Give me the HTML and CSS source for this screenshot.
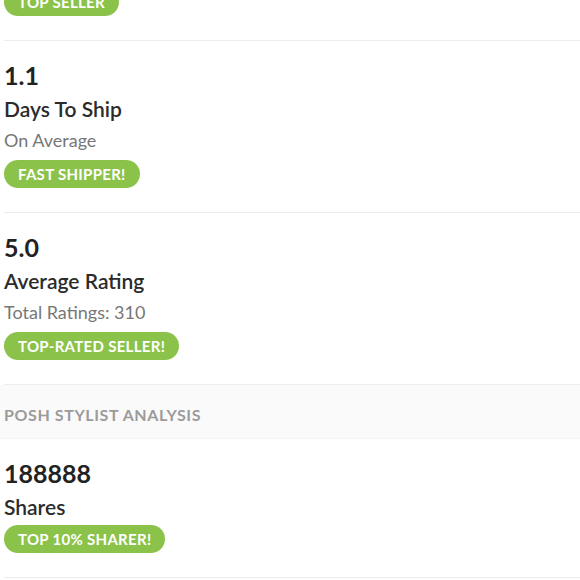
FILE: index.html
```html
<!DOCTYPE html>
<html>
<head>
<meta charset="utf-8">
<link rel="stylesheet" href="styles.css">
</head>
<body>
<div class="page">
  <section class="stat stat-first">
    <span class="badge">TOP SELLER</span>
  </section>
  <section class="stat">
    <div class="num">1.1</div>
    <div class="title">Days To Ship</div>
    <div class="sub">On Average</div>
    <span class="badge">FAST SHIPPER!</span>
  </section>
  <section class="stat">
    <div class="num">5.0</div>
    <div class="title">Average Rating</div>
    <div class="sub">Total Ratings: 310</div>
    <span class="badge">TOP-RATED SELLER!</span>
  </section>
  <div class="band">POSH STYLIST ANALYSIS</div>
  <section class="stat">
    <div class="num">188888</div>
    <div class="title">Shares</div>
    <span class="badge">TOP 10% SHARER!</span>
  </section>
</div>
</body>
</html>
```
FILE: styles.css
```css
html, body {
  margin: 0;
  padding: 0;
  background: #fff;
}
body {
  font-family: "Lato", "Liberation Sans", sans-serif;
  color: #222;
  overflow: hidden;
}
.page {
  display: flex;
  flex-direction: column;
}
.stat {
  margin-left: 4px;
  padding: 20px 0 24px;
  border-bottom: 1px solid #ececec;
  display: flex;
  flex-direction: column;
  align-items: flex-start;
}
.stat-first {
  margin-top: -12px;
  padding-top: 0;
}
.num {
  font-size: 25px;
  font-weight: 700;
  line-height: 28px;
  color: #222;
}
.title {
  font-size: 21px;
  font-weight: 600;
  line-height: 24px;
  margin-top: 8px;
  color: #2b2b2b;
}
.sub {
  font-size: 18px;
  line-height: 20px;
  margin-top: 9px;
  color: #777;
}
.badge {
  display: inline-block;
  box-sizing: border-box;
  margin-top: 10px;
  background: #8bc34a;
  color: #fff;
  font-size: 15px;
  font-weight: 700;
  line-height: 28px;
  height: 28px;
  padding: 0 14px;
  border-radius: 14px;
  letter-spacing: 0.3px;
}
.title + .badge {
  margin-top: 6px;
}
.stat-first .badge {
  margin-top: 0;
}
.band {
  background: #fafafa;
  height: 54px;
  display: flex;
  align-items: center;
  padding: 6px 0 0 4px;
  color: #9b9b9b;
  font-size: 16px;
  font-weight: 700;
  letter-spacing: 0.6px;
  border-bottom: 1px solid #f3f3f3;
  box-sizing: border-box;
}
```
